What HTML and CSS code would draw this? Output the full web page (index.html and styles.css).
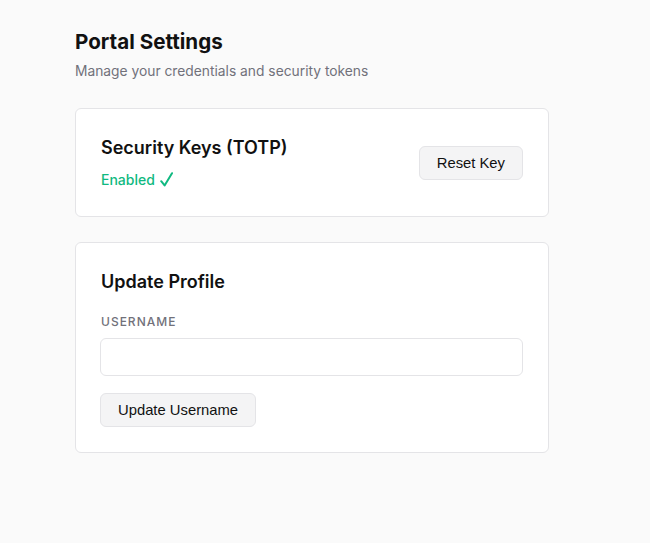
FILE: index.html
```html
<!DOCTYPE html>
<html lang="en">
<head>
    <meta charset="UTF-8">
    <meta name="viewport" content="width=device-width, initial-scale=1.0">
    <title>Portal Settings</title>
    <link rel="stylesheet" href="styles.css">
</head>
<body>
    <div class="container">
        <h1>Portal Settings</h1>
        <p class="subtitle">Manage your credentials and security tokens</p>

        <div class="card card-row">
            <div>
                <h2>Security Keys (TOTP)</h2>
                <div class="status">Enabled
                    <svg class="check" width="13" height="15" viewBox="0 0 13 15">
                        <path d="M1.2 9.2 L4.6 13.4 L12 1.2" fill="none" stroke="currentColor" stroke-width="2" stroke-linecap="round" stroke-linejoin="round"/>
                    </svg>
                </div>
            </div>
            <button>Reset Key</button>
        </div>

        <div class="card">
            <h2>Update Profile</h2>
            <label for="username">USERNAME</label>
            <input type="text" id="username">
            <button>Update Username</button>
        </div>
    </div>
</body>
</html>
```

FILE: styles.css
```css
body {
    font-family: 'Inter', 'Liberation Sans', sans-serif;
    margin: 0;
    padding: 0;
    background: #fafafa;
    color: #111;
}
.container {
    width: 474px;
    padding: 28px 75px;
}
h1 {
    font-size: 20.6px;
    font-weight: 700;
    margin: 0;
    line-height: 28px;
}
.subtitle {
    font-size: 13.8px;
    color: #71717a;
    margin: 7px 0 29px;
}
.card {
    background: #fff;
    border: 1px solid #e4e4e7;
    border-radius: 6px;
    padding: 25px 25px 25px 24px;
    margin-bottom: 25px;
    display: flex;
    flex-direction: column;
}
.card-row {
    flex-direction: row;
    justify-content: space-between;
    align-items: center;
}
h2 {
    font-size: 18px;
    font-weight: 600;
    margin: 0;
    line-height: 28px;
    padding-left: 1px;
}
.status {
    color: #10b981;
    font-size: 14px;
    font-weight: 500;
    margin-top: 6px;
    line-height: 23px;
    padding-left: 1px;
}
.check {
    vertical-align: -2px;
    margin-left: 1px;
}
label {
    font-size: 12px;
    font-weight: 500;
    letter-spacing: 1px;
    color: #71717a;
    margin-top: 18px;
    padding-left: 1px;
}
input {
    height: 38px;
    box-sizing: border-box;
    border: 1px solid #e4e4e7;
    border-radius: 6px;
    margin-top: 9px;
    padding: 0 12px;
}
button {
    font-family: 'Liberation Sans', Arial, sans-serif;
    font-size: 14.8px;
    background: #f4f4f5;
    border: 1px solid #e4e4e7;
    border-radius: 6px;
    height: 34px;
    padding: 0 17px;
    color: #111;
    cursor: pointer;
}
.card button {
    align-self: flex-start;
}
.card-row button {
    align-self: center;
}
input + button {
    margin-top: 17px;
}
```
